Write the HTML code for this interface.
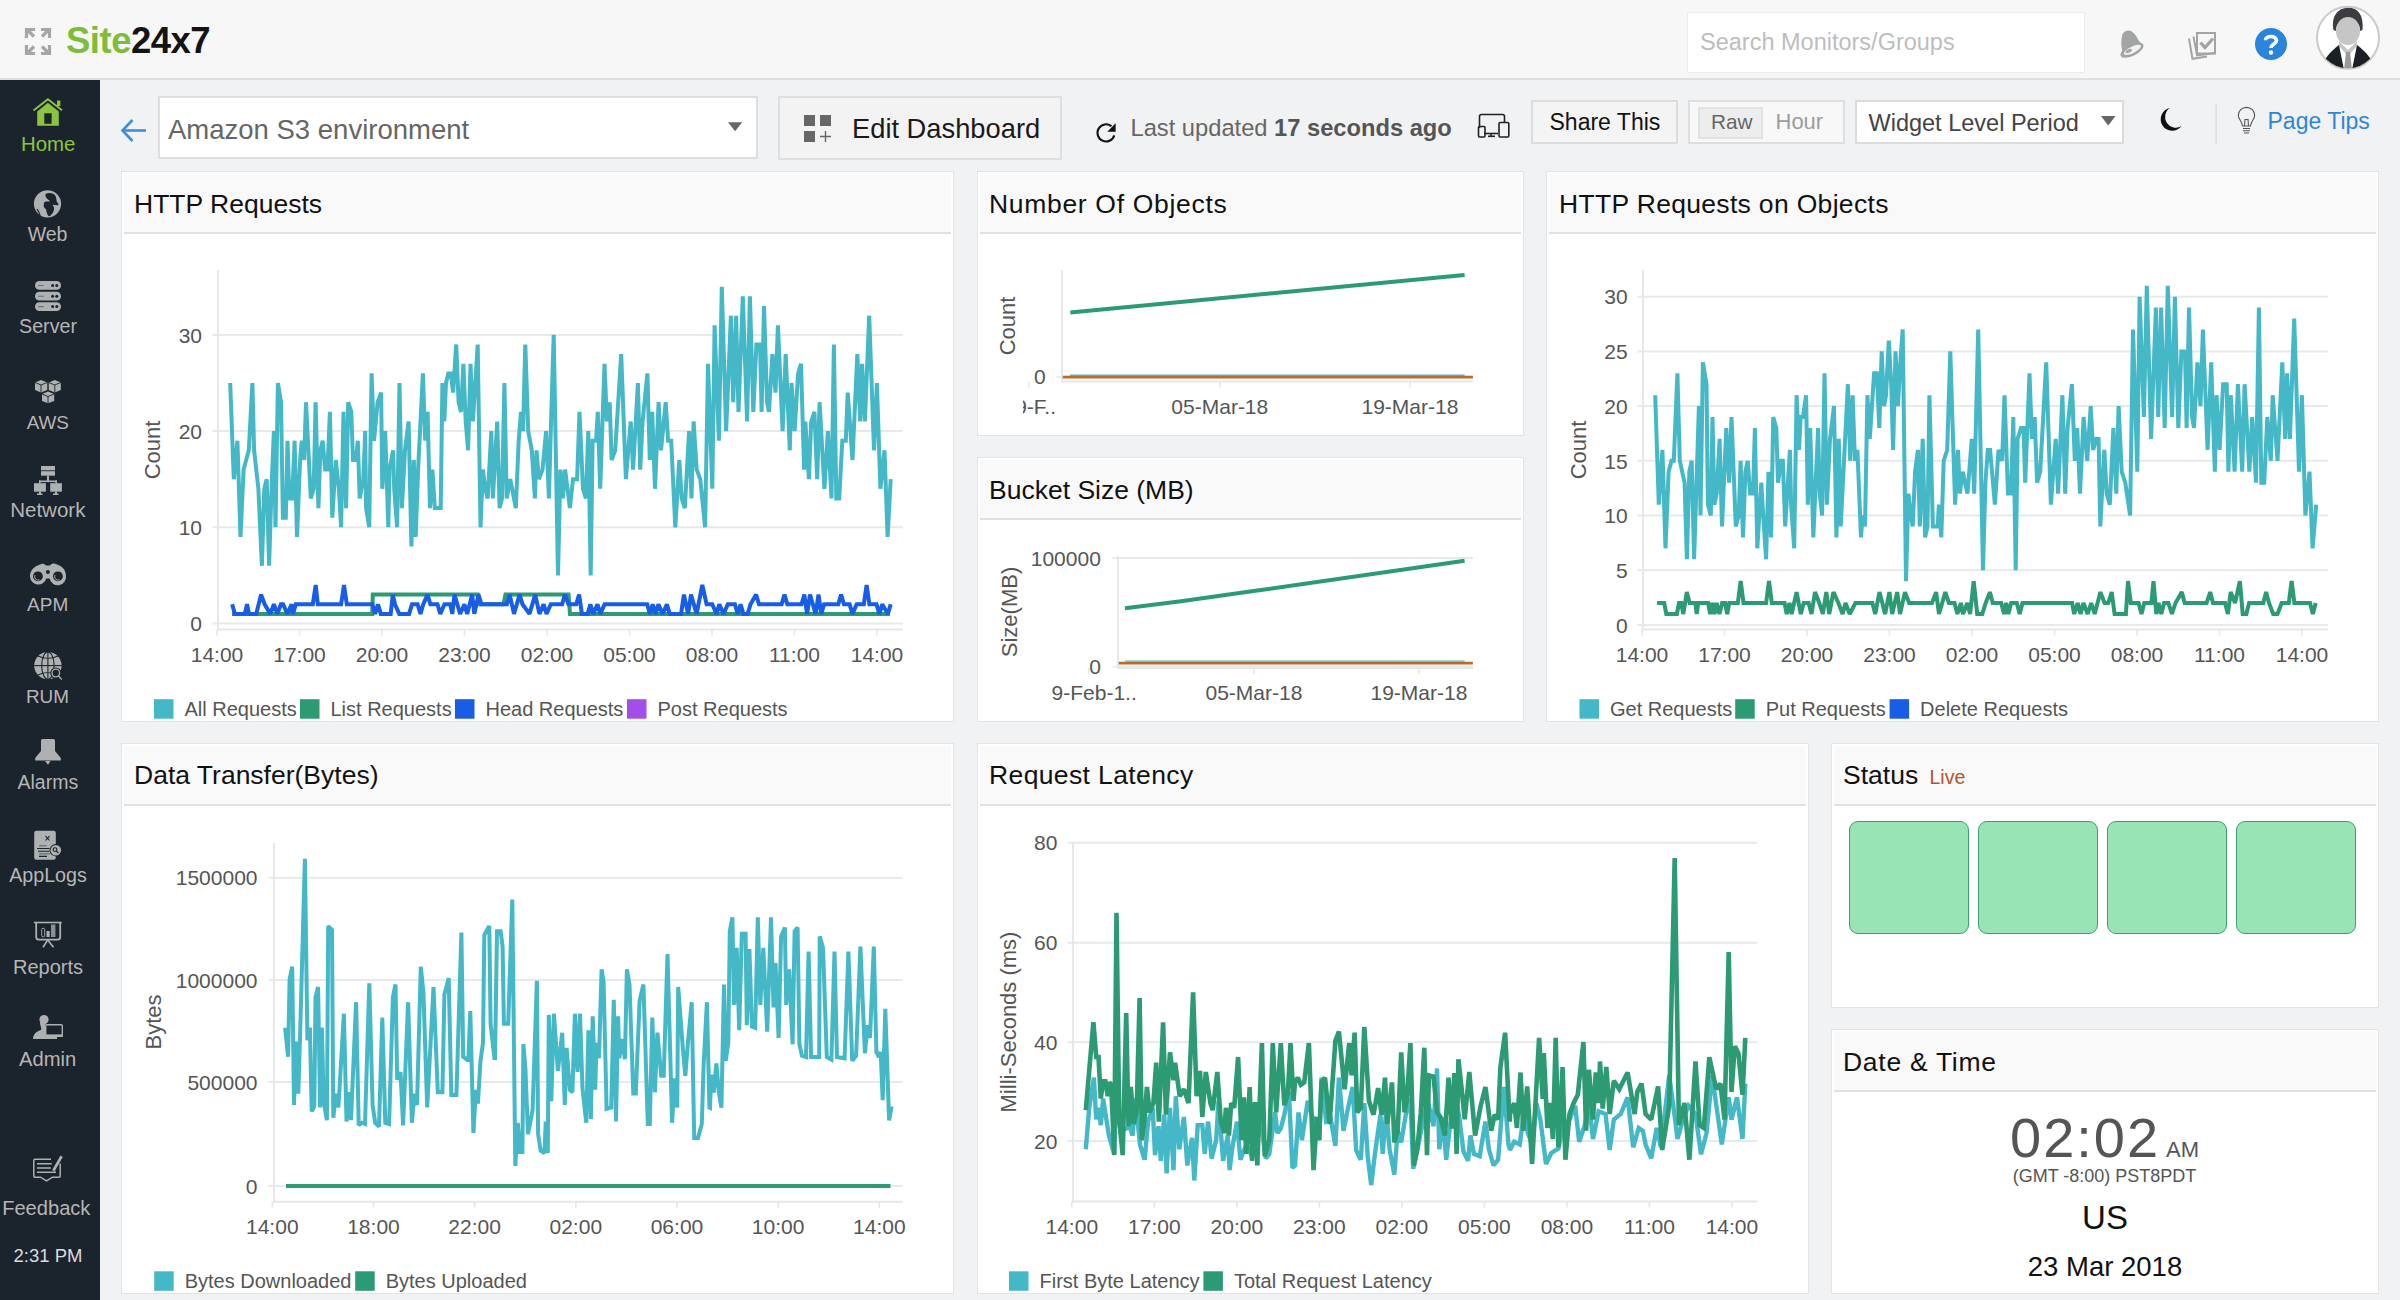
<!DOCTYPE html><html><head><meta charset="utf-8"><style>
*{margin:0;padding:0;box-sizing:border-box}
html,body{width:2400px;height:1300px;overflow:hidden;background:#f1f2f4;font-family:"Liberation Sans", sans-serif;position:relative}
.a{position:absolute}
.t{position:absolute;white-space:nowrap;line-height:1}
.w{position:absolute;background:#fff;border:1px solid #e3e4e6}
.wh{position:absolute;left:2px;right:2px;top:2px;height:60px;background:#f9f9f9;border-bottom:2px solid #e1e1e1}
svg{position:absolute;left:0;top:0}
</style></head><body>

<div class="a" style="left:0;top:0;width:2400px;height:80px;background:#f7f7f7;border-bottom:2px solid #dfdfdf"></div>
<svg class="a" width="2400" height="80" style="left:0;top:0">
<g stroke="#a3a7a7" stroke-width="3.2" fill="none" stroke-linecap="butt">
<path d="M26.5 38 V29.5 H35"/><path d="M27 29.5 L34 36.5"/>
<path d="M41 29.5 H49.5 V38"/><path d="M49 29.5 L42 36.5"/>
<path d="M26.5 45 V53.5 H35"/><path d="M27 53.5 L34 46.5"/>
<path d="M41 53.5 H49.5 V45"/><path d="M49 53.5 L42 46.5"/>
</g></svg>
<div class="t" style="left:66px;top:23.40px;font-size:36.5px;color:#555;font-weight:bold;letter-spacing:-0.5px;"><span style="color:#7dbd3a">Site</span><span style="color:#141414">24x7</span></div>
<div class="a" style="left:1687px;top:12px;width:398px;height:61px;background:#fff;border:1px solid #ececec"></div>
<div class="t" style="left:1700px;top:30.81px;font-size:23.5px;color:#bdbdbd;font-weight:normal;">Search Monitors/Groups</div>
<svg class="a" width="2400" height="80" style="left:0;top:0">
<path d="M2122.5 52 C2121 46 2121 40 2122 36 C2123 31 2128 29.5 2131 31 C2134 32.5 2137 37 2139 41 L2143 45.5 Z" fill="#a3a5a5"/>
<ellipse cx="2132" cy="50.2" rx="12.6" ry="5.6" transform="rotate(-27 2132 50.2)" fill="#a3a5a5"/>
<ellipse cx="2132.5" cy="49.8" rx="9.4" ry="3.2" transform="rotate(-27 2132.5 49.8)" fill="#f3f3f3"/>
<ellipse cx="2128.8" cy="51" rx="3.4" ry="1.6" transform="rotate(-27 2128.8 51)" fill="#a3a5a5"/>
<g fill="none" stroke="#a3a5a5" stroke-width="2">
<rect x="2197" y="33" width="18" height="20.5"/>
<path d="M2193.5 36.5 L2197 55.5 L2215 53"/>
<path d="M2189 38.5 L2192.5 58.8 L2207 56.5"/>
</g>
<path d="M2200.5 42.5 L2205 47.5 L2213 38.5" stroke="#a3a5a5" stroke-width="3.2" fill="none"/>
<circle cx="2271" cy="44" r="16" fill="#2a84db"/>
<path d="M2265.5 40.2 C2265.5 35.5 2276.5 35 2276.5 40.5 C2276.5 44 2271 44 2271 48" stroke="#fff" stroke-width="3.6" fill="none"/>
<circle cx="2271" cy="52.5" r="2.2" fill="#fff"/>
<defs><clipPath id="avc"><circle cx="2348" cy="37.8" r="30.5"/></clipPath></defs>
<circle cx="2348" cy="37.8" r="31" fill="#fff" stroke="#c9c9c9" stroke-width="2"/>
<g clip-path="url(#avc)">
<path d="M2333.5 30 C2331 16 2338 8 2348 7.8 C2358 7.8 2364 15 2362.5 30 L2360 31 C2360 24 2356 19 2348 19 C2340 19 2336 24 2336 31 Z" fill="#3b3d40"/>
<ellipse cx="2348" cy="31" rx="12" ry="14" fill="#c6c6c6"/>
<path d="M2339 41 L2348 50 L2357 41 L2357 46 L2348 56 L2339 46 Z" fill="#c6c6c6"/>
<path d="M2322 68 C2324 58 2330 52 2339 45 L2344 70 Z" fill="#1c1f24"/>
<path d="M2374 68 C2372 58 2366 52 2357 45 L2352 70 Z" fill="#1c1f24"/>
<path d="M2346 52 L2350 52 L2352 70 L2344 70 Z" fill="#9a9a9a"/>
</g>
</svg>
<div class="a" style="left:158px;top:96px;width:600px;height:63px;background:#fff;border:2px solid #dedede"></div>
<div class="t" style="left:168px;top:115.72px;font-size:27.5px;color:#666;font-weight:normal;">Amazon S3 environment</div>
<div class="a" style="left:778px;top:96px;width:284px;height:64px;background:#f3f3f4;border:2px solid #dedede"></div>
<div class="t" style="left:852px;top:114.89px;font-size:27.3px;color:#1a1a1a;font-weight:normal;">Edit Dashboard</div>
<div class="t" style="left:1130.5px;top:116.84px;font-size:23.7px;color:#666;font-weight:normal;">Last updated <b style="color:#555">17 seconds ago</b></div>
<div class="a" style="left:1531px;top:100px;width:147px;height:44px;background:#f4f4f5;border:2px solid #dcdcdc"></div>
<div class="t" style="left:1549.5px;top:110.53px;font-size:23px;color:#111;font-weight:normal;">Share This</div>
<div class="a" style="left:1688px;top:100px;width:157px;height:44px;background:#f8f8f8;border:2px solid #dedede"></div>
<div class="a" style="left:1698px;top:107px;width:65px;height:32px;background:#eceeee;border:2px solid #e2e2e2"></div>
<div class="t" style="left:1711px;top:112.19px;font-size:20.8px;color:#666;font-weight:normal;">Raw</div>
<div class="t" style="left:1775.5px;top:111.18px;font-size:22px;color:#9c9c9c;font-weight:normal;">Hour</div>
<div class="a" style="left:1855px;top:100px;width:269px;height:44px;background:#fff;border:2px solid #dcdcdc"></div>
<div class="t" style="left:1868.5px;top:111.51px;font-size:23.5px;color:#444;font-weight:normal;">Widget Level Period</div>
<div class="t" style="left:2267.5px;top:109.53px;font-size:23px;color:#2e86d8;font-weight:normal;">Page Tips</div>
<svg class="a" width="2400" height="170" style="left:0;top:0">
<g stroke="#3b8de3" stroke-width="2.6" fill="none">
<path d="M122.5 130.5 H146"/><path d="M132.5 120 L122.5 130.5 L132.5 141"/>
</g>
<path d="M728 122.3 H742.2 L735.1 131.3 Z" fill="#666"/>
<g fill="#666"><rect x="804" y="115" width="11" height="11"/><rect x="820" y="115" width="11" height="11"/><rect x="804" y="131" width="11" height="11"/></g>
<path d="M825.5 131 V142 M820 136.5 H831" stroke="#666" stroke-width="1.4"/>
<path d="M1114.3 135.4 A8.6 8.6 0 1 1 1111.5 126.2" stroke="#111" stroke-width="2" fill="none"/>
<path d="M1115.6 123.3 L1115.6 131.8 L1107.3 131.8 Z" fill="#111"/>
<g fill="none" stroke="#222" stroke-width="1.6">
<path d="M1479.5 128 V116.5 Q1479.5 114.5 1481.5 114.5 H1502.5 Q1504.5 114.5 1504.5 116.5 V122"/>
<path d="M1484 133.5 H1498"/><path d="M1491 133.5 V136"/><path d="M1488 136.3 H1495"/>
<rect x="1478.5" y="126.5" width="6.5" height="10.5" rx="1"/>
<rect x="1499" y="122.5" width="9.8" height="14.5" rx="1.2"/>
</g>
<path d="M2101 116 H2115.5 L2108.25 125.5 Z" fill="#666"/>
<path d="M2170 108 A11.5 11.5 0 1 0 2181.5 126 A10 10 0 0 1 2170 108 Z" fill="#111"/>
<rect x="2215.5" y="104" width="1.2" height="40" fill="#d9d9d9"/>
<g fill="none" stroke="#555" stroke-width="1.1">
<path d="M2242.5 126 C2242 121 2238.3 119 2238.3 115.5 A8.2 8.2 0 0 1 2254.7 115.5 C2254.7 119 2251 121 2250.5 126 Z"/>
<path d="M2243 128.5 H2250 M2243 130.8 H2250 M2244 133 H2249"/>
<path d="M2244.5 126 L2245 119 M2248.5 126 L2248 119 M2244.5 119.5 H2248.5"/>
</g>
</svg>
<div class="a" style="left:0;top:80px;width:100px;height:1220px;background:#1b232c"></div>
<svg class="a" width="100" height="1300" style="left:0;top:0">
<g fill="#8cc43f">
<path d="M33.5 110.5 L47.9 99.3 L62 110.2" stroke="#8cc43f" stroke-width="1.9" fill="none"/>
<rect x="57" y="100.5" width="3.4" height="5.5"/>
<path d="M37.2 111.5 L47.9 102.8 L58.8 111.5 V125.8 H37.2 Z"/>
</g>
<rect x="44.3" y="113.3" width="7.3" height="10.5" fill="#1b232c"/>
<g fill="#aeb1b1">
<circle cx="47.5" cy="203.8" r="13.6"/>
</g>
<path d="M45.5 194 C49 192 54 193 55.5 196 C57 199 56 202 58 203 L58.5 205 C56 206 54 204 52.5 205 C56 208 53 214 50 216 C47.5 217 46.5 212 46 209 C43 208 43.5 204 44.5 202 C46.5 201 49 202 50 201 C48 199 45 198 45.5 194 Z" fill="#1b232c"/>
<path d="M37 209 C39 212 40 214 40 216" stroke="#1b232c" stroke-width="1.3" fill="none"/>
<g fill="#aeb1b1">
<rect x="35" y="281" width="26" height="8.8" rx="4.4"/>
<rect x="35" y="291.8" width="26" height="8.8" rx="4.4"/>
<rect x="35" y="302.2" width="26" height="8.8" rx="4.4"/>
</g>
<g fill="#1b232c">
<circle cx="52.6" cy="285.5" r="1.5"/><circle cx="56.8" cy="285.5" r="1.5"/>
<circle cx="52.6" cy="296.2" r="1.5"/><circle cx="56.8" cy="296.2" r="1.5"/>
<circle cx="52.6" cy="306.6" r="1.5"/><circle cx="56.8" cy="306.6" r="1.5"/>
</g>
<g stroke="#6e7171" stroke-width="1.1"><path d="M38 285.5 H43.7 M38 296.2 H43.7 M38 306.6 H43.7"/></g>
<g fill="#aeb1b1">
<path d="M35 382.5 L41 380 L47.3 382.5 V390 L41 392.5 L35 390 Z"/>
<path d="M48.7 382.5 L54.8 380 L60.8 382.5 V390 L54.8 392.5 L48.7 390 Z"/>
<path d="M42 394 L48 391.5 L54.2 394 V401 L48 403.2 L42 401 Z"/>
</g>
<g stroke="#1b232c" stroke-width="0.9" fill="none">
<path d="M35 382.5 L41 385 L47.3 382.5 M41 385 V392.5"/>
<path d="M48.7 382.5 L54.8 385 L60.8 382.5 M54.8 385 V392.5"/>
<path d="M42 394 L48 396.5 L54.2 394 M48 396.5 V403.2"/>
</g>
<g fill="#aeb1b1">
<rect x="41" y="466" width="14" height="9.7"/>
<rect x="47" y="475.7" width="2" height="5.5"/>
<rect x="39" y="480.5" width="18" height="1.6"/>
<rect x="39" y="480.5" width="1.6" height="3"/><rect x="55.4" y="480.5" width="1.6" height="3"/>
<rect x="34" y="483.2" width="11.9" height="8.5"/>
<rect x="50.2" y="483.2" width="11.7" height="8.5"/>
<rect x="39" y="491.7" width="2" height="2.5"/><rect x="37" y="493.5" width="5.5" height="1.5"/>
<rect x="55" y="491.7" width="2" height="2.5"/><rect x="53" y="493.5" width="5.5" height="1.5"/>
</g>
<rect x="41" y="470.3" width="14" height="0.9" fill="#1b232c"/>
<g fill="#aeb1b1">
<path d="M30 576 C30 570 35 566 40 564.5 C42 563.5 44 563.5 46 565.5 L50 565.5 C52 563 54.5 563 57 564.5 C62 566 66 570 66 576 A8.3 8.3 0 0 1 49.6 578.5 L46.3 578.5 A8.3 8.3 0 0 1 30 576 Z"/>
</g>
<circle cx="37.9" cy="576.3" r="4.9" fill="#1b232c"/>
<circle cx="57.9" cy="576.3" r="4.9" fill="#1b232c"/>
<circle cx="47.9" cy="572" r="2" fill="#1b232c"/>
<path d="M35 575 A3.5 3.5 0 0 0 39.5 579.8" stroke="#aeb1b1" stroke-width="0.9" fill="none"/>
<path d="M55 575 A3.5 3.5 0 0 0 59.5 579.8" stroke="#aeb1b1" stroke-width="0.9" fill="none"/>
<circle cx="47.9" cy="665.6" r="13.7" fill="#aeb1b1"/>
<g stroke="#1b232c" stroke-width="1.1" fill="none">
<path d="M34.2 665.6 H61.6"/><path d="M47.9 652 V679.3"/>
<ellipse cx="47.9" cy="665.6" rx="6.2" ry="13.7"/>
<path d="M38 656 C44 659 52 659 58 656"/><path d="M38 675 C44 672 52 672 58 675"/>
</g>
<circle cx="55.8" cy="673" r="5.6" fill="#1b232c"/>
<circle cx="55.8" cy="673" r="3.8" fill="none" stroke="#aeb1b1" stroke-width="1.3"/>
<path d="M58.5 676 L61.8 679.5" stroke="#aeb1b1" stroke-width="1.3"/>
<path d="M42.2 739 H53.6 C54.5 739 55 740 55 741 V751 L60.8 758 V760.6 H35.2 V758 L41 751 V741 C41 740 41.5 739 42.2 739 Z" fill="#aeb1b1"/>
<path d="M45 761 H50.5 L48 764.8 Z" fill="#aeb1b1"/>
<rect x="34.2" y="830.8" width="21.6" height="29" rx="2.2" fill="#aeb1b1"/>
<path d="M45.5 836.2 L49.5 840.5 M49.5 836.2 L45.5 840.5" stroke="#1b232c" stroke-width="1.1"/>
<g fill="#767979"><rect x="39" y="845" width="7.6" height="1.5"/><rect x="39" y="853" width="11" height="1.5"/></g>
<g stroke="#1b232c" stroke-width="1.1"><path d="M37 848.5 H49.6 M38 851.3 H49.5 M39 856.4 H47"/></g>
<circle cx="55.8" cy="850.2" r="6.2" fill="#1b232c"/>
<circle cx="55.8" cy="850.2" r="5.3" fill="#aeb1b1"/>
<circle cx="55" cy="849.6" r="1.9" fill="none" stroke="#1b232c" stroke-width="1.1"/>
<path d="M56.3 851 L58.5 853" stroke="#1b232c" stroke-width="1.1"/>
<g stroke="#aeb1b1" fill="none">
<path d="M33.9 922.5 H61.8" stroke-width="1.6"/>
<path d="M36.2 922.5 V937 Q36.2 939.6 38.8 939.6 H57.6 Q60.2 939.6 60.2 937 V922.5" stroke-width="1.8"/>
<path d="M47.7 940 L43 947.3 M47.7 940 L53.5 947.3" stroke-width="1.6"/>
<rect x="41.7" y="928.3" width="3" height="8.5" rx="1.3" stroke-width="0.9"/>
</g>
<rect x="46.5" y="931" width="3.2" height="6" fill="#aeb1b1"/>
<rect x="51" y="924.5" width="4.4" height="12.5" fill="#8e9191"/>
<circle cx="44" cy="1019.5" r="4.6" fill="#aeb1b1"/>
<path d="M40 1022 C40 1026 42 1028 41 1030 C37 1031 33 1034 33 1039 H57 V1036.5 H45 V1026 C45 1024 46 1023 47.5 1022.5 Z" fill="#aeb1b1"/>
<rect x="45.7" y="1024.8" width="16.6" height="11.5" rx="1" fill="none" stroke="#aeb1b1" stroke-width="1.4"/>
<rect x="45" y="1034.4" width="18" height="2.4" fill="#aeb1b1"/>
<rect x="51.5" y="1036.5" width="5" height="2.4" fill="#aeb1b1"/>
<path d="M51 1159.2 H35 Q33.8 1159.2 33.8 1160.5 V1176 Q33.8 1177.2 35 1177.2 H40.5 L46.5 1180.8 L52.5 1177.2 H59 Q60.2 1177.2 60.2 1176 V1163.5" stroke="#aeb1b1" stroke-width="1.5" fill="none"/>
<g stroke="#aeb1b1" stroke-width="1.6"><path d="M37 1163.8 H51.8 M37 1168 H50.8 M37 1172.2 H56"/></g>
<path d="M52.2 1170 L60.4 1155.5 L62.8 1157 L54.5 1171.5 Z" fill="#aeb1b1"/>
</svg>
<div class="t" style="left:48.2px;top:133.53px;font-size:20.4px;color:#8cc43f;font-weight:normal;transform:translateX(-50%);">Home</div>
<div class="t" style="left:47.5px;top:225.29px;font-size:19.5px;color:#b6b6b6;font-weight:normal;transform:translateX(-50%);">Web</div>
<div class="t" style="left:48px;top:317.12px;font-size:19.7px;color:#b6b6b6;font-weight:normal;transform:translateX(-50%);">Server</div>
<div class="t" style="left:47.8px;top:413.50px;font-size:18.9px;color:#b6b6b6;font-weight:normal;transform:translateX(-50%);">AWS</div>
<div class="t" style="left:47.8px;top:499.95px;font-size:20.5px;color:#b6b6b6;font-weight:normal;transform:translateX(-50%);">Network</div>
<div class="t" style="left:47.7px;top:595.32px;font-size:19px;color:#b6b6b6;font-weight:normal;transform:translateX(-50%);">APM</div>
<div class="t" style="left:47.4px;top:688.20px;font-size:18.9px;color:#b6b6b6;font-weight:normal;transform:translateX(-50%);">RUM</div>
<div class="t" style="left:47.8px;top:773.49px;font-size:19.5px;color:#b6b6b6;font-weight:normal;transform:translateX(-50%);">Alarms</div>
<div class="t" style="left:48px;top:866.12px;font-size:19.7px;color:#b6b6b6;font-weight:normal;transform:translateX(-50%);">AppLogs</div>
<div class="t" style="left:48px;top:957.27px;font-size:20px;color:#b6b6b6;font-weight:normal;transform:translateX(-50%);">Reports</div>
<div class="t" style="left:47.6px;top:1048.50px;font-size:20.2px;color:#b6b6b6;font-weight:normal;transform:translateX(-50%);">Admin</div>
<div class="t" style="left:46.3px;top:1197.79px;font-size:20.1px;color:#b6b6b6;font-weight:normal;transform:translateX(-50%);">Feedback</div>
<div class="t" style="left:48px;top:1247.14px;font-size:18.5px;color:#dcdcdc;font-weight:normal;transform:translateX(-50%);">2:31 PM</div>
<div class="w" style="left:121px;top:171px;width:833px;height:551px"><div class="wh"></div></div>
<div class="w" style="left:977px;top:171px;width:547px;height:265px"><div class="wh"></div></div>
<div class="w" style="left:977px;top:457px;width:547px;height:265px"><div class="wh"></div></div>
<div class="w" style="left:1546px;top:171px;width:833px;height:551px"><div class="wh"></div></div>
<div class="w" style="left:121px;top:743px;width:833px;height:551px"><div class="wh"></div></div>
<div class="w" style="left:977px;top:743px;width:832px;height:551px"><div class="wh"></div></div>
<div class="w" style="left:1831px;top:743px;width:548px;height:265px"><div class="wh"></div></div>
<div class="w" style="left:1831px;top:1029px;width:548px;height:265px"><div class="wh"></div></div>
<div class="t" style="left:134px;top:191.07px;font-size:26.5px;color:#111;font-weight:normal;">HTTP Requests</div>
<div class="t" style="left:989px;top:191.07px;font-size:26.5px;color:#111;font-weight:normal;letter-spacing:0.68px;">Number Of Objects</div>
<div class="t" style="left:989px;top:477.37px;font-size:26.5px;color:#111;font-weight:normal;">Bucket Size (MB)</div>
<div class="t" style="left:1559px;top:191.07px;font-size:26.5px;color:#111;font-weight:normal;letter-spacing:0.32px;">HTTP Requests on Objects</div>
<div class="t" style="left:134px;top:762.37px;font-size:26.5px;color:#111;font-weight:normal;">Data Transfer(Bytes)</div>
<div class="t" style="left:989px;top:762.37px;font-size:26.5px;color:#111;font-weight:normal;letter-spacing:0.38px;">Request Latency</div>
<div class="t" style="left:1843px;top:762.37px;font-size:26.5px;color:#111;font-weight:normal;">Status</div>
<div class="t" style="left:1843px;top:1048.57px;font-size:26.5px;color:#111;font-weight:normal;letter-spacing:0.72px;">Date & Time</div>
<div class="t" style="right:2198px;top:324.62px;font-size:21px;color:#555;font-weight:normal;">30</div>
<div class="t" style="right:2198px;top:420.82px;font-size:21px;color:#555;font-weight:normal;">20</div>
<div class="t" style="right:2198px;top:517.02px;font-size:21px;color:#555;font-weight:normal;">10</div>
<div class="t" style="right:2198px;top:613.22px;font-size:21px;color:#555;font-weight:normal;">0</div>
<div class="t" style="left:217.0px;top:643.92px;font-size:21px;color:#555;font-weight:normal;transform:translateX(-50%);">14:00</div>
<div class="t" style="left:299.5px;top:643.92px;font-size:21px;color:#555;font-weight:normal;transform:translateX(-50%);">17:00</div>
<div class="t" style="left:382.0px;top:643.92px;font-size:21px;color:#555;font-weight:normal;transform:translateX(-50%);">20:00</div>
<div class="t" style="left:464.5px;top:643.92px;font-size:21px;color:#555;font-weight:normal;transform:translateX(-50%);">23:00</div>
<div class="t" style="left:547.0px;top:643.92px;font-size:21px;color:#555;font-weight:normal;transform:translateX(-50%);">02:00</div>
<div class="t" style="left:629.5px;top:643.92px;font-size:21px;color:#555;font-weight:normal;transform:translateX(-50%);">05:00</div>
<div class="t" style="left:712.0px;top:643.92px;font-size:21px;color:#555;font-weight:normal;transform:translateX(-50%);">08:00</div>
<div class="t" style="left:794.5px;top:643.92px;font-size:21px;color:#555;font-weight:normal;transform:translateX(-50%);">11:00</div>
<div class="t" style="left:877.0px;top:643.92px;font-size:21px;color:#555;font-weight:normal;transform:translateX(-50%);">14:00</div>
<div class="t" style="left:153px;top:450px;font-size:22px;color:#555;transform:translate(-50%,-50%) rotate(-90deg)">Count</div>
<div class="t" style="left:184.5px;top:698.77px;font-size:20px;color:#555;font-weight:normal;">All Requests</div>
<div class="t" style="left:330.5px;top:698.77px;font-size:20px;color:#555;font-weight:normal;">List Requests</div>
<div class="t" style="left:485.5px;top:698.77px;font-size:20px;color:#555;font-weight:normal;">Head Requests</div>
<div class="t" style="left:657.5px;top:698.77px;font-size:20px;color:#555;font-weight:normal;">Post Requests</div>
<div class="t" style="right:772.3px;top:286.42px;font-size:21px;color:#555;font-weight:normal;">30</div>
<div class="t" style="right:772.3px;top:341.12px;font-size:21px;color:#555;font-weight:normal;">25</div>
<div class="t" style="right:772.3px;top:395.82px;font-size:21px;color:#555;font-weight:normal;">20</div>
<div class="t" style="right:772.3px;top:450.52px;font-size:21px;color:#555;font-weight:normal;">15</div>
<div class="t" style="right:772.3px;top:505.22px;font-size:21px;color:#555;font-weight:normal;">10</div>
<div class="t" style="right:772.3px;top:559.92px;font-size:21px;color:#555;font-weight:normal;">5</div>
<div class="t" style="right:772.3px;top:614.62px;font-size:21px;color:#555;font-weight:normal;">0</div>
<div class="t" style="left:1642.0px;top:643.92px;font-size:21px;color:#555;font-weight:normal;transform:translateX(-50%);">14:00</div>
<div class="t" style="left:1724.5px;top:643.92px;font-size:21px;color:#555;font-weight:normal;transform:translateX(-50%);">17:00</div>
<div class="t" style="left:1807.0px;top:643.92px;font-size:21px;color:#555;font-weight:normal;transform:translateX(-50%);">20:00</div>
<div class="t" style="left:1889.5px;top:643.92px;font-size:21px;color:#555;font-weight:normal;transform:translateX(-50%);">23:00</div>
<div class="t" style="left:1972.0px;top:643.92px;font-size:21px;color:#555;font-weight:normal;transform:translateX(-50%);">02:00</div>
<div class="t" style="left:2054.5px;top:643.92px;font-size:21px;color:#555;font-weight:normal;transform:translateX(-50%);">05:00</div>
<div class="t" style="left:2137.0px;top:643.92px;font-size:21px;color:#555;font-weight:normal;transform:translateX(-50%);">08:00</div>
<div class="t" style="left:2219.5px;top:643.92px;font-size:21px;color:#555;font-weight:normal;transform:translateX(-50%);">11:00</div>
<div class="t" style="left:2302.0px;top:643.92px;font-size:21px;color:#555;font-weight:normal;transform:translateX(-50%);">14:00</div>
<div class="t" style="left:1578.6px;top:449.5px;font-size:22px;color:#555;transform:translate(-50%,-50%) rotate(-90deg)">Count</div>
<div class="t" style="left:1610.0px;top:698.77px;font-size:20px;color:#555;font-weight:normal;">Get Requests</div>
<div class="t" style="left:1765.7px;top:698.77px;font-size:20px;color:#555;font-weight:normal;">Put Requests</div>
<div class="t" style="left:1920.1px;top:698.77px;font-size:20px;color:#555;font-weight:normal;">Delete Requests</div>
<div class="t" style="right:2142.5px;top:867.42px;font-size:21px;color:#555;font-weight:normal;">1500000</div>
<div class="t" style="right:2142.5px;top:969.62px;font-size:21px;color:#555;font-weight:normal;">1000000</div>
<div class="t" style="right:2142.5px;top:1071.72px;font-size:21px;color:#555;font-weight:normal;">500000</div>
<div class="t" style="right:2142.5px;top:1175.72px;font-size:21px;color:#555;font-weight:normal;">0</div>
<div class="t" style="left:272.3px;top:1216.02px;font-size:21px;color:#555;font-weight:normal;transform:translateX(-50%);">14:00</div>
<div class="t" style="left:373.47px;top:1216.02px;font-size:21px;color:#555;font-weight:normal;transform:translateX(-50%);">18:00</div>
<div class="t" style="left:474.64px;top:1216.02px;font-size:21px;color:#555;font-weight:normal;transform:translateX(-50%);">22:00</div>
<div class="t" style="left:575.81px;top:1216.02px;font-size:21px;color:#555;font-weight:normal;transform:translateX(-50%);">02:00</div>
<div class="t" style="left:676.98px;top:1216.02px;font-size:21px;color:#555;font-weight:normal;transform:translateX(-50%);">06:00</div>
<div class="t" style="left:778.1500000000001px;top:1216.02px;font-size:21px;color:#555;font-weight:normal;transform:translateX(-50%);">10:00</div>
<div class="t" style="left:879.3199999999999px;top:1216.02px;font-size:21px;color:#555;font-weight:normal;transform:translateX(-50%);">14:00</div>
<div class="t" style="left:153.8px;top:1021.5px;font-size:22px;color:#555;transform:translate(-50%,-50%) rotate(-90deg)">Bytes</div>
<div class="t" style="left:184.7px;top:1270.87px;font-size:20px;color:#555;font-weight:normal;">Bytes Downloaded</div>
<div class="t" style="left:385.7px;top:1270.87px;font-size:20px;color:#555;font-weight:normal;">Bytes Uploaded</div>
<div class="t" style="right:1342.6px;top:832.42px;font-size:21px;color:#555;font-weight:normal;">80</div>
<div class="t" style="right:1342.6px;top:932.42px;font-size:21px;color:#555;font-weight:normal;">60</div>
<div class="t" style="right:1342.6px;top:1032.02px;font-size:21px;color:#555;font-weight:normal;">40</div>
<div class="t" style="right:1342.6px;top:1130.72px;font-size:21px;color:#555;font-weight:normal;">20</div>
<div class="t" style="left:1071.8px;top:1216.02px;font-size:21px;color:#555;font-weight:normal;transform:translateX(-50%);">14:00</div>
<div class="t" style="left:1154.32px;top:1216.02px;font-size:21px;color:#555;font-weight:normal;transform:translateX(-50%);">17:00</div>
<div class="t" style="left:1236.84px;top:1216.02px;font-size:21px;color:#555;font-weight:normal;transform:translateX(-50%);">20:00</div>
<div class="t" style="left:1319.36px;top:1216.02px;font-size:21px;color:#555;font-weight:normal;transform:translateX(-50%);">23:00</div>
<div class="t" style="left:1401.8799999999999px;top:1216.02px;font-size:21px;color:#555;font-weight:normal;transform:translateX(-50%);">02:00</div>
<div class="t" style="left:1484.3999999999999px;top:1216.02px;font-size:21px;color:#555;font-weight:normal;transform:translateX(-50%);">05:00</div>
<div class="t" style="left:1566.92px;top:1216.02px;font-size:21px;color:#555;font-weight:normal;transform:translateX(-50%);">08:00</div>
<div class="t" style="left:1649.44px;top:1216.02px;font-size:21px;color:#555;font-weight:normal;transform:translateX(-50%);">11:00</div>
<div class="t" style="left:1731.96px;top:1216.02px;font-size:21px;color:#555;font-weight:normal;transform:translateX(-50%);">14:00</div>
<div class="t" style="left:1009px;top:1021.7px;font-size:22px;color:#555;transform:translate(-50%,-50%) rotate(-90deg)">Milli-Seconds (ms)</div>
<div class="t" style="left:1039.5px;top:1270.87px;font-size:20px;color:#555;font-weight:normal;">First Byte Latency</div>
<div class="t" style="left:1233.9px;top:1270.87px;font-size:20px;color:#555;font-weight:normal;">Total Request Latency</div>
<div class="t" style="right:1354.3px;top:366.42px;font-size:21px;color:#555;font-weight:normal;">0</div>
<div class="t" style="left:1219.8px;top:395.62px;font-size:21px;color:#555;font-weight:normal;transform:translateX(-50%);">05-Mar-18</div>
<div class="t" style="left:1409.9px;top:395.62px;font-size:21px;color:#555;font-weight:normal;transform:translateX(-50%);">19-Mar-18</div>
<div class="t" style="left:1008.3px;top:325.5px;font-size:22px;color:#555;transform:translate(-50%,-50%) rotate(-90deg)">Count</div>
<div class="t" style="left:1023px;top:390px;width:33px;height:30px;overflow:hidden;font-size:21px;color:#555;line-height:1"><span style="position:absolute;right:0;top:5.5px">9-F..</span></div>
<div class="t" style="right:1299.2px;top:547.82px;font-size:21px;color:#555;font-weight:normal;">100000</div>
<div class="t" style="right:1299.2px;top:656.22px;font-size:21px;color:#555;font-weight:normal;">0</div>
<div class="t" style="left:1253.9px;top:681.82px;font-size:21px;color:#555;font-weight:normal;transform:translateX(-50%);">05-Mar-18</div>
<div class="t" style="left:1418.9px;top:681.82px;font-size:21px;color:#555;font-weight:normal;transform:translateX(-50%);">19-Mar-18</div>
<div class="t" style="left:1010px;top:611.7px;font-size:22px;color:#555;transform:translate(-50%,-50%) rotate(-90deg)">Size(MB)</div>
<div class="t" style="left:1051.6px;top:681.82px;font-size:21px;color:#555;font-weight:normal;">9-Feb-1..</div>
<div class="a" style="left:1848.5px;top:820.5px;width:120px;height:113px;background:#98e4b4;border:1.5px solid #3c9f72;border-radius:9px"></div>
<div class="a" style="left:1977.5px;top:820.5px;width:120px;height:113px;background:#98e4b4;border:1.5px solid #3c9f72;border-radius:9px"></div>
<div class="a" style="left:2106.5px;top:820.5px;width:120px;height:113px;background:#98e4b4;border:1.5px solid #3c9f72;border-radius:9px"></div>
<div class="a" style="left:2235.5px;top:820.5px;width:120px;height:113px;background:#98e4b4;border:1.5px solid #3c9f72;border-radius:9px"></div>
<div class="t" style="left:1929.5px;top:768.29px;font-size:19.5px;color:#b4532f;font-weight:normal;">Live</div>
<div class="t" style="left:2010px;top:1110.00px;font-size:56px;color:#555;font-weight:normal;letter-spacing:2px;">02:02</div>
<div class="t" style="left:2166px;top:1138.78px;font-size:22px;color:#555;font-weight:normal;">AM</div>
<div class="t" style="left:2104.5px;top:1167.16px;font-size:18px;color:#555;font-weight:normal;transform:translateX(-50%);">(GMT -8:00) PST8PDT</div>
<div class="t" style="left:2105px;top:1200.57px;font-size:33px;color:#111;font-weight:normal;transform:translateX(-50%);">US</div>
<div class="t" style="left:2105px;top:1253.42px;font-size:27.5px;color:#111;font-weight:normal;transform:translateX(-50%);">23 Mar 2018</div>
<svg class="a" width="2400" height="1300" style="left:0;top:0"><path d="M212.5 334.90000000000003 H903" stroke="#e8e9e9" stroke-width="2"/>
<path d="M212.5 431.1 H903" stroke="#e8e9e9" stroke-width="2"/>
<path d="M212.5 527.3 H903" stroke="#e8e9e9" stroke-width="2"/>
<path d="M212.5 623.5 H903" stroke="#e8e9e9" stroke-width="2"/>
<path d="M218 270 V630.5" stroke="#e6e7e7" stroke-width="2"/>
<path d="M217 629.5 H903" stroke="#e6e7e7" stroke-width="2"/>
<path d="M217.0 629.5 V635.5" stroke="#e6e7e7" stroke-width="1.6"/>
<path d="M299.5 629.5 V635.5" stroke="#e6e7e7" stroke-width="1.6"/>
<path d="M382.0 629.5 V635.5" stroke="#e6e7e7" stroke-width="1.6"/>
<path d="M464.5 629.5 V635.5" stroke="#e6e7e7" stroke-width="1.6"/>
<path d="M547.0 629.5 V635.5" stroke="#e6e7e7" stroke-width="1.6"/>
<path d="M629.5 629.5 V635.5" stroke="#e6e7e7" stroke-width="1.6"/>
<path d="M712.0 629.5 V635.5" stroke="#e6e7e7" stroke-width="1.6"/>
<path d="M794.5 629.5 V635.5" stroke="#e6e7e7" stroke-width="1.6"/>
<path d="M877.0 629.5 V635.5" stroke="#e6e7e7" stroke-width="1.6"/>
<path d="M232.0 613.9 L372.3 613.9 L372.8 594.6 L477.8 594.6 L479.0 604.3 L503.5 604.3 L505.5 594.6 L568.5 594.6 L570.0 613.9 L890.0 613.9" stroke="#2c9a73" stroke-width="4" fill="none" stroke-linejoin="miter" stroke-miterlimit="2"/>
<path d="M232.1 604.3 L234.9 613.9 L244.8 613.9 L247.0 604.3 L249.1 613.9 L256.2 613.9 L261.1 594.6 L264.7 604.3 L270.3 613.9 L273.9 604.3 L277.4 613.9 L280.9 604.3 L283.1 604.3 L287.3 613.9 L291.6 604.3 L293.0 613.9 L295.8 604.3 L312.8 604.3 L315.7 585.0 L317.8 604.3 L341.1 604.3 L344.0 585.0 L346.8 604.3 L372.3 604.3 L375.1 613.9 L378.0 604.3 L380.8 613.9 L390.7 613.9 L392.8 594.6 L395.0 604.3 L399.2 613.9 L409.1 613.9 L412.0 604.3 L417.6 604.3 L420.5 613.9 L423.3 604.3 L427.5 594.6 L430.4 604.3 L437.5 604.3 L440.3 613.9 L444.5 604.3 L450.2 604.3 L452.3 613.9 L454.5 594.6 L457.3 604.3 L460.1 613.9 L464.4 604.3 L467.2 613.9 L472.2 594.6 L474.3 613.9 L478.5 594.6 L481.4 604.3 L506.9 604.3 L509.7 594.6 L514.0 613.9 L519.6 594.6 L522.5 604.3 L529.5 613.9 L535.2 594.6 L539.4 613.9 L543.7 604.3 L546.5 613.9 L550.8 604.3 L555.0 604.3 L562.1 604.3 L564.9 594.6 L568.5 604.3 L576.2 604.3 L579.1 594.6 L581.9 613.9 L587.6 613.9 L590.4 604.3 L593.2 613.9 L597.5 604.3 L600.3 613.9 L604.6 604.3 L647.1 604.3 L649.9 613.9 L652.7 604.3 L655.6 613.9 L658.4 604.3 L662.6 613.9 L666.9 604.3 L669.7 613.9 L681.1 613.9 L683.9 594.6 L688.1 613.9 L691.0 594.6 L696.6 613.9 L702.3 585.0 L706.6 604.3 L712.2 604.3 L716.5 613.9 L719.3 604.3 L723.6 613.9 L727.8 604.3 L734.9 604.3 L737.7 613.9 L740.6 604.3 L743.4 613.9 L747.6 613.9 L750.5 604.3 L756.1 594.6 L759.0 604.3 L781.6 604.3 L784.5 594.6 L787.3 604.3 L801.5 604.3 L804.3 594.6 L807.1 613.9 L810.0 594.6 L815.6 613.9 L818.5 594.6 L821.3 613.9 L824.1 604.3 L838.3 604.3 L841.1 594.6 L844.0 604.3 L849.6 604.3 L852.5 613.9 L856.7 604.3 L863.8 604.3 L866.6 585.0 L869.4 604.3 L876.5 604.3 L879.4 613.9 L882.2 604.3 L887.9 613.9 L890.7 604.3" stroke="#185de6" stroke-width="4" fill="none" stroke-linejoin="miter" stroke-miterlimit="2"/>
<path d="M230.2 383.0 L233.8 479.2 L237.4 440.7 L240.5 536.9 L243.6 469.6 L248.8 450.3 L252.4 383.0 L254.1 450.3 L258.4 488.8 L261.9 565.8 L264.3 488.8 L266.7 479.2 L269.1 565.8 L271.5 488.8 L273.9 431.1 L275.5 527.3 L277.9 383.0 L281.0 402.2 L282.9 517.7 L285.8 517.7 L287.5 440.7 L289.4 498.4 L292.2 498.4 L294.6 440.7 L297.0 536.9 L300.1 460.0 L301.8 440.7 L304.1 460.0 L306.0 402.2 L310.8 498.4 L313.7 488.8 L315.6 402.2 L318.4 508.1 L320.4 450.3 L322.7 440.7 L325.1 469.6 L327.5 469.6 L329.9 411.9 L332.3 517.7 L335.8 460.0 L338.9 488.8 L341.1 527.3 L343.5 411.9 L346.1 508.1 L348.2 402.2 L351.3 411.9 L353.0 460.0 L356.1 460.0 L357.8 440.7 L359.7 498.4 L363.3 479.2 L365.2 431.1 L366.1 508.1 L369.2 527.3 L371.6 373.4 L374.0 440.7 L377.6 402.2 L381.1 392.6 L382.3 488.8 L385.2 431.1 L388.3 527.3 L389.5 469.6 L393.1 450.3 L394.2 488.8 L397.1 527.3 L399.5 383.0 L401.9 508.1 L405.0 450.3 L408.6 421.5 L411.4 546.5 L413.8 460.0 L415.7 536.9 L418.1 469.6 L422.9 373.4 L425.2 440.7 L427.6 411.9 L430.0 508.1 L432.4 469.6 L434.8 508.1 L440.7 508.1 L442.4 383.0 L444.3 421.5 L446.0 383.0 L448.3 373.4 L450.7 373.4 L453.1 392.6 L456.2 344.5 L458.6 402.2 L461.0 411.9 L463.4 363.8 L465.7 421.5 L468.1 450.3 L470.5 363.8 L472.9 421.5 L475.3 383.0 L477.7 344.5 L480.5 527.3 L482.9 469.6 L485.3 488.8 L487.7 498.4 L491.3 431.1 L492.9 498.4 L497.2 421.5 L499.6 508.1 L502.0 498.4 L504.4 383.0 L506.7 498.4 L510.3 479.2 L515.8 508.1 L518.7 440.7 L521.0 411.9 L523.0 431.1 L525.3 344.5 L528.2 431.1 L531.8 450.3 L534.9 498.4 L536.5 450.3 L538.9 479.2 L542.5 469.6 L546.1 431.1 L548.9 498.4 L550.8 431.1 L553.7 334.9 L558.0 575.4 L560.4 469.6 L562.8 498.4 L565.1 469.6 L569.9 508.1 L573.0 479.2 L577.1 479.2 L579.5 411.9 L583.0 488.8 L585.9 498.4 L588.3 431.1 L590.7 575.4 L592.6 440.7 L596.1 440.7 L597.8 411.9 L600.2 488.8 L604.5 363.8 L606.9 421.5 L609.7 402.2 L611.6 460.0 L615.2 450.3 L621.2 354.1 L625.9 479.2 L630.7 421.5 L633.1 469.6 L637.9 383.0 L640.2 469.6 L642.6 421.5 L647.4 373.4 L649.8 460.0 L652.2 411.9 L655.0 488.8 L658.6 402.2 L661.0 450.3 L665.7 402.2 L668.1 440.7 L671.2 440.7 L675.3 527.3 L679.3 460.0 L681.7 498.4 L684.8 508.1 L689.1 431.1 L691.5 498.4 L693.6 421.5 L696.7 469.6 L700.3 479.2 L705.1 527.3 L708.0 363.8 L712.3 488.8 L714.6 325.3 L718.9 440.7 L721.8 286.8 L726.1 431.1 L730.9 315.7 L733.2 402.2 L736.1 315.7 L738.5 411.9 L742.8 296.4 L747.1 421.5 L749.9 296.4 L753.3 411.9 L756.4 344.5 L760.0 344.5 L761.6 411.9 L764.0 306.0 L767.1 402.2 L769.0 411.9 L772.4 354.1 L775.5 392.6 L777.9 325.3 L782.6 431.1 L785.7 354.1 L789.8 450.3 L791.5 383.0 L794.6 431.1 L798.1 373.4 L801.0 363.8 L804.1 469.6 L805.3 421.5 L808.9 479.2 L811.2 421.5 L814.4 411.9 L817.2 479.2 L819.6 402.2 L824.4 488.8 L827.9 431.1 L831.5 498.4 L833.9 344.5 L836.3 498.4 L839.2 498.4 L842.3 440.7 L845.8 440.7 L847.7 392.6 L852.5 460.0 L857.3 354.1 L860.2 421.5 L862.1 363.8 L864.9 421.5 L869.2 315.7 L874.0 450.3 L876.9 383.0 L880.4 488.8 L884.5 450.3 L887.6 536.9 L890.7 479.2" stroke="#44b8c7" stroke-width="4" fill="none" stroke-linejoin="miter" stroke-miterlimit="2"/>
<rect x="154" y="699.2" width="19.5" height="19.5" fill="#44b8c7"/>
<rect x="300" y="699.2" width="19.5" height="19.5" fill="#2c9a73"/>
<rect x="455" y="699.2" width="19.5" height="19.5" fill="#185de6"/>
<rect x="627" y="699.2" width="19.5" height="19.5" fill="#a24ee9"/>
<path d="M1637.5 296.7 H2328" stroke="#e8e9e9" stroke-width="2"/>
<path d="M1637.5 351.4 H2328" stroke="#e8e9e9" stroke-width="2"/>
<path d="M1637.5 406.1 H2328" stroke="#e8e9e9" stroke-width="2"/>
<path d="M1637.5 460.79999999999995 H2328" stroke="#e8e9e9" stroke-width="2"/>
<path d="M1637.5 515.5 H2328" stroke="#e8e9e9" stroke-width="2"/>
<path d="M1637.5 570.1999999999999 H2328" stroke="#e8e9e9" stroke-width="2"/>
<path d="M1637.5 624.9 H2328" stroke="#e8e9e9" stroke-width="2"/>
<path d="M1643 270 V630.5" stroke="#e6e7e7" stroke-width="2"/>
<path d="M1642 629.5 H2328" stroke="#e6e7e7" stroke-width="2"/>
<path d="M1642.0 629.5 V635.5" stroke="#e6e7e7" stroke-width="1.6"/>
<path d="M1724.5 629.5 V635.5" stroke="#e6e7e7" stroke-width="1.6"/>
<path d="M1807.0 629.5 V635.5" stroke="#e6e7e7" stroke-width="1.6"/>
<path d="M1889.5 629.5 V635.5" stroke="#e6e7e7" stroke-width="1.6"/>
<path d="M1972.0 629.5 V635.5" stroke="#e6e7e7" stroke-width="1.6"/>
<path d="M2054.5 629.5 V635.5" stroke="#e6e7e7" stroke-width="1.6"/>
<path d="M2137.0 629.5 V635.5" stroke="#e6e7e7" stroke-width="1.6"/>
<path d="M2219.5 629.5 V635.5" stroke="#e6e7e7" stroke-width="1.6"/>
<path d="M2302.0 629.5 V635.5" stroke="#e6e7e7" stroke-width="1.6"/>
<path d="M1657.1 603.0 L1664.2 603.0 L1666.3 614.0 L1676.9 614.0 L1679.0 603.0 L1681.2 603.0 L1683.3 614.0 L1686.8 592.1 L1689.7 603.0 L1695.3 603.0 L1696.7 614.0 L1698.2 603.0 L1708.1 603.0 L1710.2 614.0 L1712.3 603.0 L1714.4 614.0 L1716.6 603.0 L1719.4 614.0 L1722.2 603.0 L1725.1 603.0 L1727.2 614.0 L1729.3 603.0 L1737.8 603.0 L1740.7 581.1 L1743.5 603.0 L1766.1 603.0 L1769.0 581.1 L1771.8 603.0 L1784.6 603.0 L1786.7 614.0 L1789.5 603.0 L1791.6 614.0 L1796.6 592.1 L1800.8 614.0 L1803.7 603.0 L1808.6 603.0 L1811.5 614.0 L1815.0 592.1 L1819.3 603.0 L1822.8 614.0 L1826.3 592.1 L1829.2 614.0 L1833.4 592.1 L1838.4 603.0 L1842.6 614.0 L1845.5 603.0 L1849.7 614.0 L1855.4 603.0 L1872.4 603.0 L1875.2 614.0 L1879.5 592.1 L1885.1 614.0 L1889.4 592.1 L1892.2 614.0 L1897.2 592.1 L1900.0 614.0 L1905.0 592.1 L1909.2 603.0 L1931.9 603.0 L1936.1 592.1 L1939.0 614.0 L1945.3 592.1 L1948.9 603.0 L1954.5 603.0 L1957.4 614.0 L1960.9 603.0 L1963.0 614.0 L1967.3 603.0 L1970.1 614.0 L1973.7 581.1 L1977.2 614.0 L1982.2 614.0 L1985.7 603.0 L1989.9 592.1 L1992.7 603.0 L2001.2 603.0 L2004.1 614.0 L2006.2 603.0 L2008.3 614.0 L2011.2 603.0 L2016.8 603.0 L2019.7 614.0 L2022.5 603.0 L2072.1 603.0 L2074.2 614.0 L2077.7 603.0 L2080.6 614.0 L2083.4 603.0 L2087.6 614.0 L2091.2 603.0 L2094.7 614.0 L2100.4 592.1 L2104.6 603.0 L2108.2 603.0 L2111.7 592.1 L2114.6 614.0 L2125.9 614.0 L2128.0 581.1 L2130.8 603.0 L2138.6 603.0 L2141.5 614.0 L2144.3 603.0 L2151.4 603.0 L2153.5 581.1 L2156.3 614.0 L2158.5 603.0 L2161.3 614.0 L2164.1 603.0 L2168.4 603.0 L2171.9 614.0 L2175.5 603.0 L2181.8 592.1 L2184.7 603.0 L2206.6 603.0 L2210.2 592.1 L2213.0 603.0 L2225.0 603.0 L2227.9 614.0 L2230.7 592.1 L2235.0 603.0 L2239.9 581.1 L2242.7 614.0 L2246.3 614.0 L2249.1 603.0 L2263.3 603.0 L2266.1 592.1 L2269.0 603.0 L2273.2 614.0 L2277.5 614.0 L2281.7 603.0 L2288.8 603.0 L2291.6 581.1 L2294.4 603.0 L2310.0 603.0 L2312.9 614.0 L2315.7 603.0" stroke="#2c9a73" stroke-width="4" fill="none" stroke-linejoin="miter" stroke-miterlimit="2"/>
<path d="M1655.2 395.2 L1658.8 504.6 L1662.4 449.9 L1665.5 548.3 L1668.6 471.7 L1671.5 460.8 L1673.8 460.8 L1677.4 373.3 L1679.8 460.8 L1684.6 482.7 L1686.9 559.3 L1689.3 471.7 L1691.7 460.8 L1694.1 559.3 L1696.5 482.7 L1698.9 406.1 L1700.5 515.5 L1702.9 362.3 L1706.5 384.2 L1707.9 504.6 L1710.8 515.5 L1712.5 417.0 L1714.4 504.6 L1716.7 493.6 L1719.6 438.9 L1722.0 526.4 L1726.3 428.0 L1729.1 482.7 L1731.5 417.0 L1735.8 526.4 L1738.7 515.5 L1740.6 460.8 L1743.0 537.4 L1745.4 471.7 L1747.7 460.8 L1750.1 493.6 L1753.0 493.6 L1754.9 428.0 L1757.3 548.3 L1761.3 482.7 L1763.2 515.5 L1766.1 559.3 L1768.5 471.7 L1771.1 537.4 L1773.2 417.0 L1776.3 428.0 L1778.0 482.7 L1781.1 460.8 L1782.8 460.8 L1785.2 526.4 L1789.9 449.9 L1791.1 504.6 L1794.2 548.3 L1796.6 395.2 L1799.0 449.9 L1800.7 417.0 L1803.0 417.0 L1806.1 395.2 L1807.8 504.6 L1810.2 428.0 L1813.3 537.4 L1818.1 428.0 L1819.7 493.6 L1822.1 515.5 L1824.5 373.3 L1826.9 504.6 L1830.0 438.9 L1834.0 406.1 L1836.4 537.4 L1838.8 438.9 L1840.7 526.4 L1847.9 384.2 L1850.2 460.8 L1852.6 395.2 L1855.0 460.8 L1857.4 449.9 L1861.0 537.4 L1862.6 515.5 L1865.0 526.4 L1867.4 395.2 L1869.8 438.9 L1874.1 373.3 L1876.9 373.3 L1879.3 428.0 L1881.7 351.4 L1884.1 406.1 L1886.0 395.2 L1888.8 340.5 L1891.2 384.2 L1893.1 449.9 L1895.5 351.4 L1897.9 406.1 L1900.3 362.3 L1902.7 329.5 L1906.0 581.1 L1908.4 493.6 L1910.8 515.5 L1912.7 526.4 L1915.1 471.7 L1917.9 449.9 L1919.8 526.4 L1922.7 438.9 L1925.1 537.4 L1927.5 526.4 L1929.4 395.2 L1932.9 526.4 L1937.7 526.4 L1938.9 504.6 L1941.3 537.4 L1943.7 460.8 L1947.2 449.9 L1950.3 351.4 L1955.1 504.6 L1958.0 449.9 L1959.9 493.6 L1962.7 471.7 L1967.5 493.6 L1971.8 438.9 L1974.2 493.6 L1978.2 329.5 L1983.0 570.2 L1985.4 482.7 L1987.8 449.9 L1990.1 449.9 L1994.9 504.6 L1998.5 449.9 L2002.1 460.8 L2004.5 395.2 L2008.0 493.6 L2010.9 493.6 L2013.3 417.0 L2015.7 570.2 L2017.6 438.9 L2021.1 428.0 L2023.5 428.0 L2025.2 482.7 L2029.5 373.3 L2031.9 438.9 L2034.7 417.0 L2037.1 482.7 L2040.2 471.7 L2046.2 362.3 L2050.9 504.6 L2055.7 438.9 L2058.1 493.6 L2062.4 395.2 L2065.2 493.6 L2067.6 428.0 L2071.9 384.2 L2074.8 460.8 L2077.2 428.0 L2080.0 493.6 L2083.6 417.0 L2087.2 460.8 L2090.7 406.1 L2093.1 449.9 L2096.2 438.9 L2098.6 438.9 L2100.3 526.4 L2104.3 449.9 L2106.7 493.6 L2109.8 504.6 L2113.4 428.0 L2116.3 493.6 L2118.6 406.1 L2121.7 471.7 L2125.3 482.7 L2130.1 515.5 L2133.0 329.5 L2137.3 471.7 L2139.6 296.7 L2143.9 417.0 L2146.8 285.8 L2151.1 438.9 L2155.9 307.6 L2158.2 417.0 L2161.1 307.6 L2164.7 428.0 L2167.8 285.8 L2172.1 417.0 L2174.9 296.7 L2178.3 428.0 L2181.4 351.4 L2185.0 351.4 L2186.6 428.0 L2189.0 307.6 L2192.1 417.0 L2194.0 428.0 L2197.4 362.3 L2200.5 406.1 L2202.9 329.5 L2207.6 449.9 L2211.2 362.3 L2214.8 471.7 L2216.5 395.2 L2219.6 449.9 L2223.1 384.2 L2226.7 384.2 L2228.4 471.7 L2230.8 395.2 L2234.6 471.7 L2237.9 384.2 L2242.2 471.7 L2244.6 384.2 L2249.4 471.7 L2252.2 417.0 L2256.0 482.7 L2258.9 307.6 L2261.3 482.7 L2264.2 482.7 L2267.3 417.0 L2270.8 460.8 L2272.7 395.2 L2277.5 460.8 L2282.3 362.3 L2285.2 438.9 L2287.1 373.3 L2289.9 438.9 L2294.2 318.6 L2299.0 471.7 L2301.9 395.2 L2305.4 515.5 L2309.5 471.7 L2312.6 548.3 L2316.2 504.6" stroke="#44b8c7" stroke-width="4" fill="none" stroke-linejoin="miter" stroke-miterlimit="2"/>
<rect x="1579.5" y="699.2" width="19.5" height="19.5" fill="#44b8c7"/>
<rect x="1735.2" y="699.2" width="19.5" height="19.5" fill="#2c9a73"/>
<rect x="1889.6" y="699.2" width="19.5" height="19.5" fill="#185de6"/>
<path d="M268.5 877.7 H902.6" stroke="#e8e9e9" stroke-width="2"/>
<path d="M268.5 979.9 H902.6" stroke="#e8e9e9" stroke-width="2"/>
<path d="M268.5 1082 H902.6" stroke="#e8e9e9" stroke-width="2"/>
<path d="M268.5 1186 H902.6" stroke="#e8e9e9" stroke-width="2"/>
<path d="M274 843 V1202.7" stroke="#e6e7e7" stroke-width="2"/>
<path d="M273 1201.7 H902.6" stroke="#e6e7e7" stroke-width="2"/>
<path d="M272.3 1201.7 V1207.7" stroke="#e6e7e7" stroke-width="1.6"/>
<path d="M373.47 1201.7 V1207.7" stroke="#e6e7e7" stroke-width="1.6"/>
<path d="M474.64 1201.7 V1207.7" stroke="#e6e7e7" stroke-width="1.6"/>
<path d="M575.81 1201.7 V1207.7" stroke="#e6e7e7" stroke-width="1.6"/>
<path d="M676.98 1201.7 V1207.7" stroke="#e6e7e7" stroke-width="1.6"/>
<path d="M778.1500000000001 1201.7 V1207.7" stroke="#e6e7e7" stroke-width="1.6"/>
<path d="M879.3199999999999 1201.7 V1207.7" stroke="#e6e7e7" stroke-width="1.6"/>
<path d="M286.0 1186.0 L890.4 1186.0" stroke="#2c9a73" stroke-width="4" fill="none" stroke-linejoin="miter" stroke-miterlimit="2"/>
<path d="M285.1 1027.6 L288.1 1056.8 L289.6 979.4 L292.2 966.7 L294.0 1105.0 L295.7 1041.6 L298.3 1093.6 L300.3 1027.6 L304.9 858.9 L307.4 1040.3 L309.9 1027.6 L311.7 1111.4 L314.3 1106.3 L315.5 997.2 L318.1 987.0 L320.1 1107.5 L321.9 1027.6 L323.6 1101.2 L326.9 1120.2 L328.2 926.1 L332.0 929.9 L333.3 1117.7 L335.8 1093.6 L338.4 1107.5 L343.9 1013.7 L346.5 1121.5 L349.8 1092.3 L351.0 1120.2 L356.1 1002.2 L358.7 1125.3 L361.7 1122.8 L365.0 1124.0 L369.3 983.2 L372.6 1105.0 L375.2 1122.8 L379.0 1126.6 L382.3 1017.5 L385.3 1122.8 L389.1 1124.0 L392.9 997.2 L395.5 984.5 L397.2 1079.6 L400.5 1072.0 L403.1 1125.3 L408.1 1002.2 L411.9 1122.8 L414.5 1093.6 L417.0 1105.0 L420.8 966.7 L423.4 992.1 L427.2 1107.5 L433.5 987.0 L437.8 1092.3 L442.4 1092.3 L444.4 994.6 L448.7 978.1 L451.3 1094.9 L456.4 1094.9 L461.4 932.5 L463.2 1056.8 L468.3 1060.6 L470.3 1011.1 L473.4 1132.9 L475.9 1089.8 L477.9 1103.7 L480.5 1060.6 L483.0 1042.8 L484.3 935.0 L489.3 926.1 L490.6 1023.8 L494.4 1058.1 L495.0 1058.1 L497.0 931.2 L500.6 931.2 L502.6 946.4 L503.9 1023.8 L508.2 1023.8 L512.3 899.5 L515.3 1165.9 L517.8 1122.8 L519.9 1152.0 L522.4 1152.0 L523.4 1044.1 L525.4 1068.2 L528.0 1134.2 L532.6 1110.1 L536.9 980.7 L538.1 1134.2 L540.7 1150.7 L544.5 1153.2 L545.7 1121.5 L547.8 1153.2 L548.8 1014.9 L551.3 1101.2 L553.9 1013.7 L557.9 1070.8 L562.2 1032.7 L564.8 1105.0 L566.6 1047.9 L569.9 1089.8 L572.4 1092.3 L574.9 1013.7 L577.5 1072.0 L580.0 1013.7 L582.5 1088.5 L586.3 1122.8 L588.4 1030.2 L590.9 1119.0 L592.7 1016.2 L595.2 1089.8 L596.5 1042.8 L599.0 1058.1 L601.6 969.3 L603.6 981.9 L606.6 1108.8 L611.2 1107.5 L613.8 999.7 L616.0 1121.5 L618.1 1016.2 L619.3 1058.1 L622.4 1039.0 L624.9 1059.3 L626.9 969.3 L629.5 984.5 L633.3 1093.6 L635.8 1093.6 L639.6 1001.0 L643.4 984.5 L647.8 1124.0 L649.8 1124.0 L652.3 1017.5 L654.9 1092.3 L657.4 1032.7 L661.2 1075.8 L663.7 1075.8 L667.5 954.0 L672.1 1122.8 L674.6 1078.4 L677.2 1107.5 L678.2 987.0 L682.8 1047.9 L685.3 1075.8 L687.8 1044.1 L691.7 1002.2 L694.2 1138.0 L698.0 1138.0 L701.8 1124.0 L703.6 1065.7 L706.9 1002.2 L709.4 1107.5 L710.0 1107.8 L711.3 1074.8 L713.8 1092.6 L716.4 1063.4 L718.9 1092.6 L721.4 1107.8 L724.0 984.6 L725.7 1060.8 L728.3 1043.0 L729.8 931.3 L732.4 917.3 L734.1 1004.9 L736.7 947.8 L739.2 1030.3 L741.8 933.8 L745.6 933.8 L746.8 1025.3 L749.4 949.1 L751.9 1026.5 L755.2 1027.8 L757.8 917.3 L760.3 1004.9 L763.3 947.8 L767.2 1031.6 L771.0 917.3 L773.5 1007.5 L775.5 963.0 L778.6 1038.0 L781.1 936.4 L784.9 927.5 L786.2 1004.9 L789.2 969.4 L792.6 1044.3 L794.6 931.3 L797.6 927.5 L799.4 1044.3 L801.9 1055.7 L806.0 1057.0 L808.6 951.6 L811.1 1057.0 L819.2 1057.0 L819.7 936.4 L823.0 947.8 L826.8 1057.0 L831.4 1059.6 L834.5 951.6 L837.0 1057.0 L844.6 1058.3 L848.4 951.6 L852.2 1060.8 L856.1 1055.7 L860.4 946.5 L864.9 1053.2 L867.5 1025.3 L870.0 1038.0 L873.8 946.5 L876.4 1051.9 L878.9 1057.0 L880.7 1051.9 L882.7 1100.2 L885.3 1008.8 L889.1 1120.5 L891.6 1106.5" stroke="#44b8c7" stroke-width="4" fill="none" stroke-linejoin="miter" stroke-miterlimit="2"/>
<rect x="154.2" y="1271.3" width="19.5" height="19.5" fill="#44b8c7"/>
<rect x="355.2" y="1271.3" width="19.5" height="19.5" fill="#2c9a73"/>
<path d="M1067.5 842.7 H1757.4" stroke="#e8e9e9" stroke-width="2"/>
<path d="M1067.5 942.7 H1757.4" stroke="#e8e9e9" stroke-width="2"/>
<path d="M1067.5 1042.3 H1757.4" stroke="#e8e9e9" stroke-width="2"/>
<path d="M1067.5 1141 H1757.4" stroke="#e8e9e9" stroke-width="2"/>
<path d="M1073 842 V1202.5" stroke="#e6e7e7" stroke-width="2"/>
<path d="M1072 1201.5 H1757.4" stroke="#e6e7e7" stroke-width="2"/>
<path d="M1071.8 1201.5 V1207.5" stroke="#e6e7e7" stroke-width="1.6"/>
<path d="M1154.32 1201.5 V1207.5" stroke="#e6e7e7" stroke-width="1.6"/>
<path d="M1236.84 1201.5 V1207.5" stroke="#e6e7e7" stroke-width="1.6"/>
<path d="M1319.36 1201.5 V1207.5" stroke="#e6e7e7" stroke-width="1.6"/>
<path d="M1401.8799999999999 1201.5 V1207.5" stroke="#e6e7e7" stroke-width="1.6"/>
<path d="M1484.3999999999999 1201.5 V1207.5" stroke="#e6e7e7" stroke-width="1.6"/>
<path d="M1566.92 1201.5 V1207.5" stroke="#e6e7e7" stroke-width="1.6"/>
<path d="M1649.44 1201.5 V1207.5" stroke="#e6e7e7" stroke-width="1.6"/>
<path d="M1731.96 1201.5 V1207.5" stroke="#e6e7e7" stroke-width="1.6"/>
<path d="M1085.8 1149.3 L1089.2 1107.8 L1093.9 1077.7 L1096.2 1119.3 L1098.5 1107.8 L1100.8 1125.1 L1103.1 1098.5 L1108.9 1135.5 L1114.2 1153.9 L1115.8 1096.2 L1120.4 1130.8 L1126.2 1128.5 L1129.6 1126.2 L1132.6 1135.5 L1135.4 1098.5 L1140.0 1144.7 L1144.6 1159.7 L1148.1 1121.6 L1152.7 1107.8 L1155.0 1155.1 L1158.5 1126.2 L1160.8 1160.8 L1164.3 1114.7 L1166.6 1173.5 L1170.0 1107.8 L1173.5 1170.1 L1175.8 1096.2 L1179.3 1149.3 L1183.9 1117.0 L1187.3 1165.5 L1192.0 1137.8 L1194.3 1180.5 L1197.7 1125.1 L1202.3 1125.1 L1204.7 1153.9 L1208.1 1121.6 L1211.6 1158.5 L1216.2 1140.1 L1218.5 1100.8 L1223.1 1160.8 L1227.7 1135.5 L1229.6 1170.1 L1232.4 1147.0 L1237.0 1121.6 L1240.4 1159.7 L1246.2 1144.7 L1250.8 1153.9 L1255.4 1149.3 L1260.1 1117.0 L1265.8 1158.5 L1269.3 1153.9 L1275.1 1112.4 L1277.4 1133.1 L1280.8 1128.5 L1284.3 1114.7 L1288.9 1091.6 L1292.4 1167.8 L1295.0 1165.5 L1298.5 1112.4 L1301.9 1140.1 L1307.7 1100.8 L1312.3 1117.0 L1315.8 1119.3 L1319.2 1140.1 L1321.5 1077.7 L1326.2 1121.6 L1330.8 1119.3 L1335.4 1145.8 L1338.9 1077.7 L1343.5 1130.8 L1348.1 1107.8 L1352.7 1087.0 L1356.2 1150.5 L1360.8 1159.7 L1364.3 1103.1 L1367.7 1156.2 L1371.2 1185.1 L1374.6 1156.2 L1380.4 1114.7 L1382.7 1153.9 L1386.2 1110.1 L1389.6 1149.3 L1394.3 1174.7 L1397.7 1130.8 L1401.2 1142.4 L1405.8 1114.7 L1410.4 1098.5 L1413.2 1168.9 L1417.3 1149.3 L1423.1 1121.6 L1427.7 1100.8 L1433.5 1126.2 L1437.0 1068.5 L1439.3 1149.3 L1442.7 1117.0 L1446.2 1159.7 L1449.7 1128.5 L1454.3 1093.9 L1458.9 1114.7 L1463.5 1151.6 L1468.1 1160.8 L1470.4 1135.5 L1473.9 1153.9 L1479.7 1156.2 L1485.4 1121.6 L1488.9 1149.3 L1493.5 1165.5 L1498.1 1159.7 L1503.9 1087.0 L1508.5 1144.7 L1510.0 1150.0 L1514.2 1141.7 L1519.7 1144.5 L1523.8 1114.0 L1528.0 1133.4 L1532.1 1144.5 L1536.3 1103.0 L1540.4 1119.6 L1546.0 1163.9 L1551.5 1152.8 L1558.4 1148.7 L1562.6 1127.9 L1569.5 1119.6 L1575.1 1105.7 L1579.2 1141.7 L1584.7 1125.1 L1588.9 1103.0 L1593.0 1139.0 L1598.6 1111.3 L1605.5 1114.0 L1609.7 1150.0 L1613.8 1119.6 L1620.7 1114.0 L1627.6 1097.4 L1633.2 1147.3 L1638.7 1127.9 L1642.9 1130.7 L1645.6 1144.5 L1651.2 1158.3 L1656.7 1127.9 L1660.9 1147.3 L1669.2 1075.3 L1673.3 1105.7 L1677.5 1139.0 L1683.0 1119.6 L1688.5 1105.7 L1695.5 1114.0 L1701.0 1154.2 L1706.5 1133.4 L1712.1 1075.3 L1721.8 1144.5 L1728.7 1097.4 L1731.5 1119.6 L1737.0 1097.4 L1742.5 1139.0 L1745.3 1083.6" stroke="#44b8c7" stroke-width="4.4" fill="none" stroke-linejoin="miter" stroke-miterlimit="2"/>
<path d="M1085.8 1110.1 L1093.4 1022.3 L1096.2 1057.0 L1098.5 1057.0 L1100.8 1098.5 L1103.1 1081.2 L1105.4 1081.2 L1107.7 1096.2 L1109.5 1082.4 L1111.2 1084.7 L1114.2 1155.1 L1116.5 912.7 L1119.2 1119.3 L1122.7 1155.1 L1126.2 1013.1 L1128.5 1126.2 L1130.8 1087.0 L1133.6 1123.9 L1136.6 1112.4 L1139.6 998.1 L1141.9 1140.1 L1144.6 1119.3 L1146.9 1087.0 L1149.7 1112.4 L1153.4 1103.1 L1156.2 1062.7 L1158.9 1121.6 L1163.1 1022.3 L1165.9 1114.7 L1170.0 1052.4 L1173.5 1080.1 L1175.1 1062.7 L1179.7 1096.2 L1183.9 1089.3 L1188.5 1103.1 L1193.1 992.3 L1196.6 1096.2 L1200.0 1070.8 L1202.3 1117.0 L1205.8 1072.0 L1210.4 1103.1 L1212.7 1110.1 L1217.3 1072.0 L1220.8 1121.6 L1224.3 1133.1 L1225.9 1107.8 L1228.9 1135.5 L1231.2 1103.1 L1234.2 1107.8 L1238.1 1057.0 L1241.6 1140.1 L1243.9 1097.4 L1246.2 1153.9 L1249.7 1087.0 L1252.0 1160.8 L1255.0 1102.0 L1257.3 1165.5 L1261.9 1043.1 L1264.7 1156.2 L1269.3 1140.1 L1272.8 1043.1 L1276.2 1112.4 L1280.8 1043.1 L1284.3 1105.4 L1287.8 1093.9 L1290.5 1043.1 L1293.5 1100.8 L1295.0 1082.4 L1297.8 1077.7 L1300.8 1084.7 L1304.2 1082.4 L1308.9 1043.1 L1313.5 1170.1 L1316.9 1117.0 L1319.2 1140.1 L1321.5 1082.4 L1325.0 1077.7 L1329.6 1123.9 L1335.4 1040.8 L1338.9 1031.6 L1344.6 1089.3 L1349.2 1043.1 L1351.6 1075.4 L1354.6 1032.7 L1357.3 1112.4 L1360.8 1107.8 L1364.3 1027.0 L1368.9 1100.8 L1373.5 1114.7 L1378.1 1088.1 L1381.6 1114.7 L1385.0 1077.7 L1387.3 1123.9 L1392.0 1082.4 L1394.3 1142.4 L1397.7 1130.8 L1401.2 1052.4 L1404.6 1112.4 L1407.0 1098.5 L1410.4 1043.1 L1413.9 1165.5 L1417.3 1149.3 L1420.8 1112.4 L1424.3 1047.7 L1427.0 1155.1 L1428.9 1075.4 L1433.5 1076.6 L1437.0 1112.4 L1440.4 1117.0 L1445.0 1135.5 L1448.5 1077.7 L1452.0 1128.5 L1454.3 1073.1 L1456.6 1153.9 L1458.4 1059.3 L1461.2 1084.7 L1464.7 1119.3 L1469.3 1072.0 L1475.1 1135.5 L1480.8 1105.4 L1485.4 1087.0 L1491.2 1130.8 L1494.7 1114.7 L1498.1 1119.3 L1500.4 1067.4 L1505.1 1032.7 L1509.7 1121.6 L1510.0 1114.0 L1514.2 1103.0 L1516.9 1127.9 L1520.5 1072.5 L1523.3 1130.7 L1527.2 1086.4 L1532.1 1163.9 L1539.1 1037.9 L1542.7 1098.8 L1543.8 1053.1 L1547.4 1127.9 L1550.1 1103.0 L1552.9 1139.0 L1555.7 1037.9 L1558.4 1147.3 L1562.6 1067.0 L1565.4 1159.7 L1569.5 1114.0 L1573.7 1103.0 L1577.8 1094.7 L1583.4 1042.1 L1586.1 1130.7 L1588.9 1069.8 L1593.0 1119.6 L1595.8 1072.5 L1598.6 1103.0 L1600.0 1061.5 L1602.7 1108.5 L1606.3 1067.0 L1609.7 1114.0 L1613.8 1080.8 L1619.3 1089.1 L1623.5 1080.8 L1627.6 1072.5 L1634.6 1114.0 L1637.3 1091.9 L1641.5 1083.6 L1645.6 1114.0 L1651.2 1119.6 L1658.1 1086.4 L1662.2 1150.0 L1669.2 1105.7 L1674.7 858.0 L1678.9 1125.1 L1684.4 1103.0 L1689.4 1159.7 L1695.5 1061.5 L1699.6 1125.1 L1703.8 1127.9 L1709.3 1057.3 L1716.2 1089.1 L1720.4 1083.6 L1724.5 1119.6 L1728.7 952.1 L1731.5 1091.9 L1734.8 1046.2 L1738.4 1053.1 L1742.5 1094.7 L1745.3 1037.9" stroke="#2c9a73" stroke-width="4.6" fill="none" stroke-linejoin="miter" stroke-miterlimit="2"/>
<rect x="1009" y="1271.3" width="19.5" height="19.5" fill="#44b8c7"/>
<rect x="1203.4" y="1271.3" width="19.5" height="19.5" fill="#2c9a73"/>
<path d="M1056.5 376.7 H1472.9" stroke="#e8e9e9" stroke-width="2"/>
<path d="M1062 270.5 V382.5" stroke="#e6e7e7" stroke-width="2"/>
<path d="M1061 381.5 H1472.9" stroke="#e6e7e7" stroke-width="2"/>
<path d="M1028.8 381.5 V387.5" stroke="#e6e7e7" stroke-width="1.6"/>
<path d="M1219.8 381.5 V387.5" stroke="#e6e7e7" stroke-width="1.6"/>
<path d="M1409.9 381.5 V387.5" stroke="#e6e7e7" stroke-width="1.6"/>
<path d="M1062.7 377.1 L1472.9 377.1" stroke="#bd6a2e" stroke-width="2.8" fill="none" stroke-linejoin="miter" stroke-miterlimit="2"/>
<path d="M1070.0 375.3 L1464.6 375.3" stroke="#44b8c7" stroke-width="1.4" fill="none" stroke-linejoin="miter" stroke-miterlimit="2"/>
<path d="M1070.3 312.6 L1464.6 274.9" stroke="#2c9a73" stroke-width="4" fill="none" stroke-linejoin="miter" stroke-miterlimit="2"/>
<path d="M1112.5 558.1 H1472.9" stroke="#e8e9e9" stroke-width="2"/>
<path d="M1112.5 666.5 H1472.9" stroke="#e8e9e9" stroke-width="2"/>
<path d="M1118 556.3 V669" stroke="#e6e7e7" stroke-width="2"/>
<path d="M1117 668 H1472.9" stroke="#e6e7e7" stroke-width="2"/>
<path d="M1088.6 668 V674" stroke="#e6e7e7" stroke-width="1.6"/>
<path d="M1253.9 668 V674" stroke="#e6e7e7" stroke-width="1.6"/>
<path d="M1418.9 668 V674" stroke="#e6e7e7" stroke-width="1.6"/>
<path d="M1118.7 663.2 L1472.9 663.2" stroke="#bd6a2e" stroke-width="2.8" fill="none" stroke-linejoin="miter" stroke-miterlimit="2"/>
<path d="M1125.0 661.1 L1464.6 661.1" stroke="#44b8c7" stroke-width="1.4" fill="none" stroke-linejoin="miter" stroke-miterlimit="2"/>
<path d="M1125.0 608.2 L1181.0 601.3 L1250.0 591.6 L1464.6 560.7" stroke="#2c9a73" stroke-width="4" fill="none" stroke-linejoin="miter" stroke-miterlimit="2"/></svg>
</body></html>
